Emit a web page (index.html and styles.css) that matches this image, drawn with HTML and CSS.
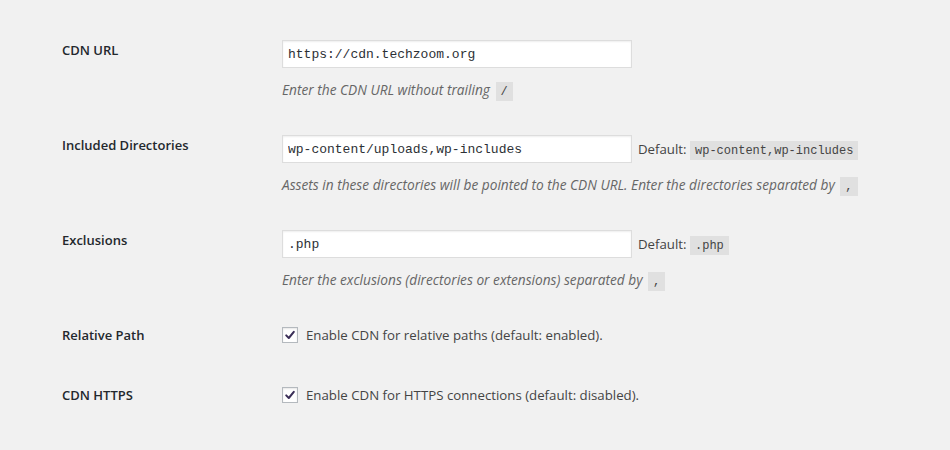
FILE: index.html
```html
<!DOCTYPE html>
<html lang="en">
<head>
  <meta charset="UTF-8">
  <title>CDN Settings</title>
  <link rel="stylesheet" href="styles.css">
</head>
<body>
  <div class="form-table">
    <div class="row">
      <div class="th">CDN URL</div>
      <div class="td">
        <div class="field">
          <input type="text" class="regular-text" value="https://cdn.techzoom.org">
        </div>
        <p class="description">Enter the CDN URL without trailing <code>/</code></p>
      </div>
    </div>

    <div class="row">
      <div class="th">Included Directories</div>
      <div class="td">
        <div class="field">
          <input type="text" class="regular-text" value="wp-content/uploads,wp-includes">
          <span class="default">Default: <code>wp-content,wp-includes</code></span>
        </div>
        <p class="description">Assets in these directories will be pointed to the CDN URL. Enter the directories separated by <code>,</code></p>
      </div>
    </div>

    <div class="row">
      <div class="th">Exclusions</div>
      <div class="td">
        <div class="field">
          <input type="text" class="regular-text" value=".php">
          <span class="default">Default: <code>.php</code></span>
        </div>
        <p class="description">Enter the exclusions (directories or extensions) separated by <code>,</code></p>
      </div>
    </div>

    <div class="row">
      <div class="th">Relative Path</div>
      <div class="td">
        <label class="check">
          <span class="box">
            <svg viewBox="0 0 16 16" width="16" height="16"><path d="M4.2 8.4 L6.8 11 L11.8 4.8" fill="none" stroke="currentColor" stroke-width="2" stroke-linecap="round" stroke-linejoin="round"/></svg>
          </span>
          Enable CDN for relative paths (default: enabled).
        </label>
      </div>
    </div>

    <div class="row last">
      <div class="th">CDN HTTPS</div>
      <div class="td">
        <label class="check">
          <span class="box">
            <svg viewBox="0 0 16 16" width="16" height="16"><path d="M4.2 8.4 L6.8 11 L11.8 4.8" fill="none" stroke="currentColor" stroke-width="2" stroke-linecap="round" stroke-linejoin="round"/></svg>
          </span>
          Enable CDN for HTTPS connections (default: disabled).
        </label>
      </div>
    </div>
  </div>
</body>
</html>
```

FILE: styles.css
```css
* {
  box-sizing: border-box;
  margin: 0;
  padding: 0;
}
body {
  background: #f1f1f1;
  color: #444;
  font-family: "Open Sans", sans-serif;
  font-size: 13px;
}
.form-table {
  display: flex;
  flex-direction: column;
  gap: 35px;
  padding: 40px 0 0 62px;
}
.row {
  display: flex;
  align-items: flex-start;
}
.row.last {
  margin-top: 5px;
}
.th {
  width: 220px;
  flex-shrink: 0;
  line-height: 20px;
  font-weight: 600;
  color: #23282d;
}
.td {
  line-height: 20px;
}
.field {
  display: flex;
  align-items: center;
  height: 28px;
}
.regular-text {
  width: 350px;
  height: 28px;
  padding: 3px 5px;
  border: 1px solid #ddd;
  background: #fff;
  box-shadow: inset 0 1px 2px rgba(0,0,0,0.07);
  font-family: "Liberation Mono", monospace;
  font-size: 13px;
  color: #2c3035;
  outline: none;
}
.default {
  margin-left: 6px;
  font-size: 13.25px;
}
code {
  font-family: "Liberation Mono", monospace;
  font-size: 12px;
  line-height: 1;
  padding: 3px 5px 2px;
  background: rgba(0,0,0,0.07);
  color: #444;
}
.description {
  height: 20px;
  margin-top: 12px;
  font-size: 13.7px;
  font-style: italic;
  color: #666;
}
.description code {
  margin-left: 2px;
  font-style: normal;
}
.check {
  display: flex;
  align-items: center;
  gap: 8px;
  height: 20px;
  font-size: 13.25px;
}
.box {
  display: block;
  width: 16px;
  height: 16px;
  border: 1px solid #b4b9be;
  background: #fff;
  box-shadow: inset 0 1px 2px rgba(0,0,0,0.1);
  color: #3b2f58;
}
.box svg {
  display: block;
  margin: -1px;
}
```
